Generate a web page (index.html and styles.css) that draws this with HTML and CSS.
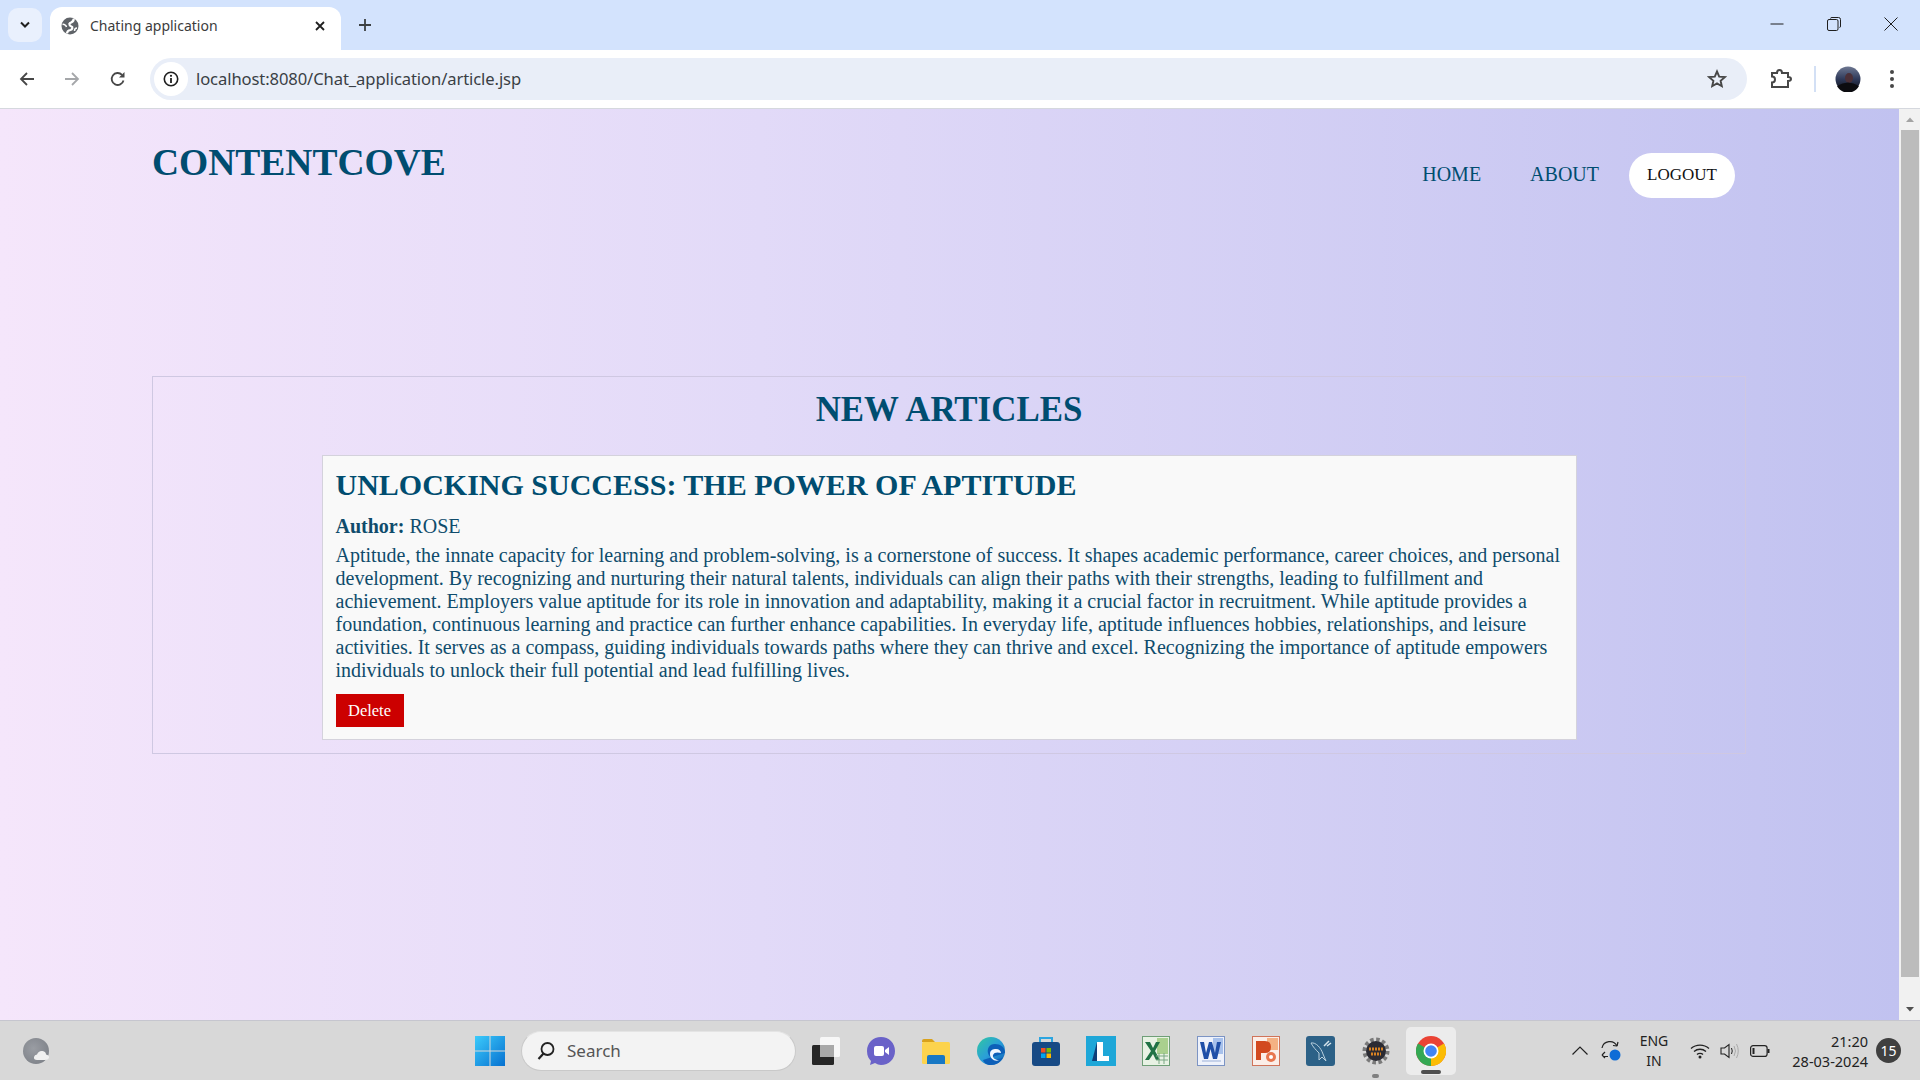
FILE: index.html
```html
<!DOCTYPE html>
<html lang="en">
<head>
<meta charset="utf-8">
<title>Chating application</title>
<link rel="stylesheet" href="styles.css">
</head>
<body>
<div class="tabstrip">
  <button class="tab-search"><svg width="12" height="8" viewBox="0 0 12 8"><path d="M2 1.500 6 5.500 10 1.500" fill="none" stroke="#1f1f1f" stroke-width="2"/></svg></button>
  <div class="tab">
    <svg class="favicon" width="18" height="18" viewBox="0 0 18 18"><circle cx="9" cy="9" r="8.500" fill="#5f6368"/><path d="M12.500 1.500C13.500 4.500 10.500 5 9 6 7.500 7 9 9 10.500 9.500 12 10 11.500 12.500 9.500 13 7 13.500 6 14.500 6 16.500" fill="none" stroke="#fff" stroke-width="2.200"/><path d="M1.500 7.500C3 7 5 8 5.500 10" fill="none" stroke="#fff" stroke-width="1.500"/><path d="M16 11C14.500 11 13.500 12 13.500 14" fill="none" stroke="#fff" stroke-width="1.500"/></svg>
    <span class="tab-title">Chating application</span>
    <svg class="tab-close" width="10" height="10" viewBox="0 0 10 10"><path d="M1 1 9 9M9 1 1 9" stroke="#1f1f1f" stroke-width="1.800"/></svg>
  </div>
  <svg class="new-tab" width="14" height="14" viewBox="0 0 14 14"><path d="M7 1V13M1 7H13" stroke="#3c4043" stroke-width="1.800"/></svg>
  <div class="window-controls">
    <svg width="14" height="14" viewBox="0 0 14 14"><path d="M0.500 7H13.500" stroke="#1f1f1f"/></svg>
    <svg width="14" height="14" viewBox="0 0 14 14"><path d="M3.500 1.500Q3.500 .5 5 .5H11.500Q13.500 .5 13.500 2.500V9Q13.500 10.500 12.500 10.500" fill="none" stroke="#1f1f1f"/><rect x=".5" y="2.500" width="10.500" height="11" rx="1.500" fill="none" stroke="#1f1f1f"/></svg>
    <svg width="14" height="14" viewBox="0 0 14 14"><path d="M.5 .5 13.500 13.500M13.500 .5 .5 13.500" stroke="#1f1f1f"/></svg>
  </div>
</div>
<div class="toolbar">
  <svg class="nav-icon nav-back" width="16" height="16" viewBox="0 0 16 16"><path d="M15 8H2M8 2 2 8 8 14" fill="none" stroke="#474747" stroke-width="1.800"/></svg>
  <svg class="nav-icon" width="16" height="16" viewBox="0 0 16 16"><path d="M1 8H14M8 2 14 8 8 14" fill="none" stroke="#a5a7aa" stroke-width="1.800"/></svg>
  <svg class="nav-icon" width="16" height="16" viewBox="0 0 16 16"><path d="M13.500 9.500A6 6 0 1 1 12 3.800" fill="none" stroke="#474747" stroke-width="1.800"/><path d="M14.500 1V6.500H9Z" fill="#474747"/></svg>
  <div class="omnibox">
    <span class="site-info"><svg width="16" height="16" viewBox="0 0 16 16"><circle cx="8" cy="8" r="6.700" fill="none" stroke="#1f1f1f" stroke-width="1.600"/><path d="M8 7V12" stroke="#1f1f1f" stroke-width="1.800"/><circle cx="8" cy="4.800" r="1.100" fill="#1f1f1f"/></svg></span>
    <span class="url">localhost:8080/Chat_application/article.jsp</span>
    <svg class="star" width="20" height="20" viewBox="0 0 20 20"><path d="M10 2.500 12.200 7.600 17.800 8.100 13.600 11.800 14.800 17.200 10 14.400 5.200 17.200 6.400 11.800 2.200 8.100 7.800 7.600Z" fill="none" stroke="#474747" stroke-width="1.900"/></svg>
  </div>
  <svg class="ext" width="22" height="20" viewBox="0 0 22 20"><path d="M2 4H7Q7 1 9.500 1T12 4H18V8Q21 8 21 10T18 12V18H2V13.500Q5 13.500 5 10.500T2 7.500Z" fill="none" stroke="#474747" stroke-width="2"/></svg>
  <span class="tool-sep"></span>
  <svg class="avatar" width="26" height="26" viewBox="0 0 26 26"><defs><linearGradient id="sky" x1="0" y1="0" x2="0" y2="1"><stop offset="0" stop-color="#6d7791"/><stop offset=".5" stop-color="#2f3a5a"/><stop offset="1" stop-color="#0b0c12"/></linearGradient></defs><circle cx="13" cy="13" r="12.500" fill="url(#sky)"/><ellipse cx="14" cy="12" rx="4" ry="5" fill="#4b3038"/><path d="M2 20Q13 13 24 20A12.500 12.500 0 0 1 2 20Z" fill="#0c0c10"/></svg>
  <svg class="menu" width="6" height="20" viewBox="0 0 6 20"><circle cx="3" cy="3" r="2" fill="#474747"/><circle cx="3" cy="10" r="2" fill="#474747"/><circle cx="3" cy="17" r="2" fill="#474747"/></svg>
</div>
<div class="viewport">
  <main class="page">
    <header class="site-header">
      <h1 class="logo">CONTENTCOVE</h1>
      <nav class="site-nav">
        <a class="nav-link">HOME</a>
        <a class="nav-link">ABOUT</a>
        <a class="nav-pill">LOGOUT</a>
      </nav>
    </header>
    <section class="articles">
      <h2 class="articles-title">NEW ARTICLES</h2>
      <article class="card">
        <h3 class="card-title">UNLOCKING SUCCESS: THE POWER OF APTITUDE</h3>
        <p class="author"><strong>Author:</strong> ROSE</p>
        <p class="body-text">Aptitude, the innate capacity for learning and problem-solving, is a cornerstone of success. It shapes academic performance, career choices, and personal development. By recognizing and nurturing their natural talents, individuals can align their paths with their strengths, leading to fulfillment and achievement. Employers value aptitude for its role in innovation and adaptability, making it a crucial factor in recruitment. While aptitude provides a foundation, continuous learning and practice can further enhance capabilities. In everyday life, aptitude influences hobbies, relationships, and leisure activities. It serves as a compass, guiding individuals towards paths where they can thrive and excel. Recognizing the importance of aptitude empowers individuals to unlock their full potential and lead fulfilling lives.</p>
        <button class="delete">Delete</button>
      </article>
    </section>
  </main>
  <div class="scrollbar">
    <svg width="20" height="21" viewBox="0 0 20 21"><path d="M6 13 10 8.500 14 13Z" fill="#a3a3a3"/></svg>
    <span class="thumb"></span>
    <svg class="scroll-down" width="20" height="20" viewBox="0 0 20 20"><path d="M6 7 10 11.500 14 7Z" fill="#505050"/></svg>
  </div>
</div>
<footer class="taskbar">
  <svg class="weather" width="28" height="28" viewBox="0 0 28 28"><defs><radialGradient id="moon" cx=".4" cy=".4" r=".7"><stop offset="0" stop-color="#9a9da3"/><stop offset="1" stop-color="#7d8188"/></radialGradient></defs><circle cx="14" cy="14" r="13" fill="url(#moon)"/><path d="M15 23Q11.500 23 12 20 12.500 17.500 15 17.500 16.500 13.500 20.500 14 24 14.500 24 17.500 27.500 18 27 21 26 23 23 23Z" fill="#f0f0f0"/></svg>
  <svg class="start" width="30" height="30" viewBox="0 0 30 30"><defs><linearGradient id="win" x1="0" y1="0" x2="1" y2="1"><stop offset="0" stop-color="#3ccbfb"/><stop offset="1" stop-color="#0670d0"/></linearGradient></defs><path d="M0 0H14.500V14.500H0ZM15.500 0H30V14.500H15.500ZM0 15.500H14.500V30H0ZM15.500 15.500H30V30H15.500Z" fill="url(#win)"/></svg>
  <div class="search">
    <svg width="20" height="20" viewBox="0 0 20 20"><circle cx="11.500" cy="8" r="6" fill="none" stroke="#222" stroke-width="1.800"/><path d="M7.500 12.500 2.500 18" stroke="#222" stroke-width="2.200"/></svg>
    <span>Search</span>
  </div>
  <div class="apps">
    <span class="app"><svg width="30" height="30" viewBox="0 0 30 30"><rect x="1" y="9" width="22" height="20" rx="1.500" fill="#262626"/><rect x="9" y="1" width="20" height="20" rx="1.500" fill="#f7f7f7"/><rect x="9" y="9" width="14" height="12" fill="#a9a9a9"/></svg></span>
    <span class="app"><svg width="30" height="30" viewBox="0 0 30 30"><path d="M15 1C7 1 1 7 1 15c0 5 2 8 4 10l-1 4 5-2c2 1 4 2 6 2 8 0 14-6 14-14S23 1 15 1Z" fill="#6a62c8"/><rect x="8" y="10" width="10" height="10" rx="2" fill="#fff"/><path d="M19 14 23 11V19L19 16Z" fill="#fff"/></svg></span>
    <span class="app"><svg width="30" height="30" viewBox="0 0 30 30"><path d="M1 5Q1 3 3 3H11L14 6H1Z" fill="#d9a21c"/><rect x="1" y="6" width="28" height="22" rx="1.500" fill="#fcd34d"/><path d="M6 28V21Q6 19 8 19H22Q24 19 24 21V28Z" fill="#1878c4"/></svg></span>
    <span class="app"><svg width="30" height="30" viewBox="0 0 30 30"><defs><linearGradient id="edge" x1="0" y1="0" x2="1" y2="1"><stop offset="0" stop-color="#30c8a0"/><stop offset=".5" stop-color="#2a9fd8"/><stop offset="1" stop-color="#0d5fb8"/></linearGradient></defs><circle cx="15" cy="15" r="14" fill="url(#edge)"/><path d="M29 17C29 11 24 8 19 8 13 8 11 13 12 17 13 21 17 23 21 23 24 23 26 22 27 21 25 26 20 29 15 29 11 29 8 27 7 24" fill="#0d5fb8"/><path d="M14 18C14 14 17 13 20 13 23 13 25 15 25 17 22 16 18 16 17 19 16 22 20 24 23 24 19 26 14 23 14 18Z" fill="#f0f7ff"/></svg></span>
    <span class="app"><svg width="30" height="30" viewBox="0 0 30 30"><path d="M9 6V2H21V6" fill="none" stroke="#2ca5e0" stroke-width="2"/><rect x="1" y="6" width="28" height="24" rx="3" fill="#174a85"/><rect x="10" y="12" width="4.500" height="4.500" fill="#f25022"/><rect x="15.500" y="12" width="4.500" height="4.500" fill="#7fba00"/><rect x="10" y="17.500" width="4.500" height="4.500" fill="#00a4ef"/><rect x="15.500" y="17.500" width="4.500" height="4.500" fill="#ffb900"/></svg></span>
    <span class="app"><svg width="30" height="30" viewBox="0 0 30 30"><rect width="30" height="30" fill="#1ea7d8"/><path d="M11 6H17V20H23V25H11Z" fill="#fff"/><path d="M11 6 6 25H11Z" fill="#103f78"/></svg></span>
    <span class="app"><svg width="28" height="30" viewBox="0 0 28 30"><rect x=".5" y=".5" width="27" height="29" fill="#e8f2e4" stroke="#6f9f78"/><path d="M15 2H26V18H15Z" fill="#a9d08e"/><path d="M3 6H8L11 12 14 6H18L13 15 18 24H14L11 18 7 24H3L9 15Z" fill="#207245"/><path d="M14 20H26M14 24H26M17 17V28M22 17V28" stroke="#7aa884"/></svg></span>
    <span class="app"><svg width="28" height="30" viewBox="0 0 28 30"><rect x=".5" y=".5" width="27" height="29" fill="#eef2fb" stroke="#7c94c4"/><path d="M16 2H26V18H16Z" fill="#a7c1ec"/><path d="M3 6H7L9 17 12 6H15L18 17 20 6H24L20 23H16L13.500 13 11 23H7Z" fill="#1f4fa8"/><path d="M5 25H24" stroke="#9bb0d8"/></svg></span>
    <span class="app"><svg width="28" height="30" viewBox="0 0 28 30"><rect x=".5" y=".5" width="27" height="29" fill="#fbeee8" stroke="#d0745a"/><path d="M15 2H26V14H15Z" fill="#f4b183"/><path d="M4 5H13Q19 5 19 11T13 17H9V24H4Z" fill="#d2491f"/><circle cx="19" cy="21" r="5" fill="#e8764e"/><circle cx="19" cy="21" r="2" fill="#fff"/></svg></span>
    <span class="app"><svg width="29" height="30" viewBox="0 0 29 30"><rect width="29" height="30" rx="3" fill="#2c6187"/><path d="M5 7C10 6 15 12 17 18L20 25 16 21 13 24 13 17C10 14 7 11 5 7Z" fill="none" stroke="#b9d0de" stroke-width="1"/><path d="M18 10 23 5M21 10 25 7" stroke="#d6e4ec" stroke-width="1.500"/></svg></span>
    <span class="app app-running"><svg width="28" height="28" viewBox="0 0 28 28"><circle cx="14" cy="14" r="11.500" fill="none" stroke="#7a7a7a" stroke-width="4" stroke-dasharray="3.500 2.500"/><circle cx="14" cy="14" r="10" fill="#2b2b33"/><path d="M7 12H21M9 17H19" stroke="#d98222" stroke-width="3" stroke-dasharray="2 1"/></svg></span>
    <span class="app app-active"><svg width="30" height="30" viewBox="0 0 30 30"><circle cx="15" cy="15" r="15" fill="#ea4335"/><path d="M15 15 28 7.500A15 15 0 0 1 15 30Z" fill="#fbbc04"/><path d="M15 15 15 30A15 15 0 0 1 2 7.500Z" fill="#34a853"/><circle cx="15" cy="15" r="7.500" fill="#fff"/><circle cx="15" cy="15" r="5.800" fill="#4285f4"/></svg></span>
  </div>
  <div class="tray">
    <svg width="16" height="9" viewBox="0 0 16 9"><path d="M.5 8.500 8 1 15.500 8.500" fill="none" stroke="#222" stroke-width="1.200"/></svg>
    <svg class="tray-sync" width="22" height="22" viewBox="0 0 22 22"><path d="M2 8A8 8 0 0 1 17 6M3 16.500H8" fill="none" stroke="#222" stroke-width="1.200"/><path d="M17 6 13 5.500M17 6 18 2M2 15 5 12M2 15 5 18" stroke="#222" stroke-width="1.200"/><circle cx="15" cy="15" r="5.500" fill="#0f6cd6"/></svg>
    <div class="lang"><span>ENG</span><span>IN</span></div>
    <svg class="tray-wifi" width="20" height="16" viewBox="0 0 20 16"><path d="M1 5.500C6 1 14 1 19 5.500M4 8.500C7.500 5.500 12.500 5.500 16 8.500M7 11.500C8.500 10 11.500 10 13 11.500" fill="none" stroke="#222" stroke-width="1.300"/><circle cx="10" cy="14" r="1.500" fill="#222"/></svg>
    <svg class="tray-vol" width="20" height="16" viewBox="0 0 20 16"><path d="M1 5H4.500L9 1.500V14.500L4.500 11H1Z" fill="none" stroke="#222" stroke-width="1.100"/><path d="M11.500 5Q13 8 11.500 11" fill="none" stroke="#222"/><path d="M14 3Q17 8 14 13M16.500 1Q20 8 16.500 15" fill="none" stroke="#aaa"/></svg>
    <svg class="tray-bat" width="20" height="12" viewBox="0 0 20 12"><rect x=".6" y=".6" width="16.500" height="10.800" rx="2.500" fill="none" stroke="#222" stroke-width="1.200"/><rect x="2.500" y="3" width="2" height="6" fill="#222"/><rect x="17.500" y="4" width="2" height="4" fill="#222"/></svg>
    <div class="clock"><span>21:20</span><span>28-03-2024</span></div>
    <span class="badge">15</span>
  </div>
</footer>
</body>
</html>
```
FILE: styles.css
```css
* { box-sizing: border-box; }
html, body { margin: 0; height: 100%; }
body {
  width: 1920px; height: 1080px; overflow: hidden;
  display: flex; flex-direction: column;
  font-family: "Liberation Serif", serif;
}
h1, h2, h3, p { margin: 0; }

/* browser chrome */
.tabstrip {
  height: 50px; flex: none; background: #d3e3fd;
  display: flex; align-items: flex-start;
  padding-left: 8px;
  font-family: "Noto Sans", sans-serif;
}
.tab-search {
  width: 34px; height: 34px; margin-top: 8px; border: 0; border-radius: 10px;
  background: #e9f0fd; display: flex; align-items: center; justify-content: center; padding: 0;
}
.tab {
  width: 291px; height: 43px; margin: 7px 0 0 8px;
  background: #fff; border-radius: 12px 12px 0 0;
  display: flex; align-items: center; padding: 0 16px 6px 11px;
}
.favicon { flex: none; }
.tab-title { margin-left: 11px; font-size: 14px; color: #3c3c3c; flex: 1; }
.new-tab { margin: 18px 0 0 17px; }
.window-controls { margin-left: auto; display: flex; gap: 43px; padding: 17px 22px 0 0; }
.toolbar {
  height: 59px; flex: none; background: #fff; border-bottom: 1px solid #d5d8de;
  border-radius: 12px 12px 0 0;
  display: flex; align-items: center; padding: 0 20px 1px 19px;
}
.nav-icon { margin-right: 30px; flex: none; }
.nav-back { margin-right: 29px; }
.omnibox {
  width: 1597px; height: 42px; margin-left: -6px; background: #e9eef8; border-radius: 21px;
  display: flex; align-items: center; padding: 0 20px 0 4px;
}
.site-info {
  width: 34px; height: 34px; border-radius: 50%; background: #fff; margin-right: 8px;
  display: flex; align-items: center; justify-content: center;
}
.url { font: 16.600px "Noto Sans", sans-serif; color: #3a3f45; flex: 1; letter-spacing: -.1px; }
.ext { margin-left: 23px; flex: none; }
.tool-sep { width: 2px; height: 26px; background: #d3e0f5; margin-left: 22px; }
.avatar { margin-left: 19px; flex: none; }
.menu { margin-left: 28px; flex: none; }

/* page */
.viewport { flex: 1; display: flex; min-height: 0; }
.page {
  width: 1899px; flex: none; padding: 0 153px 0 152px;
  background: linear-gradient(90deg, #f5e6fb 0%, #e2daf8 40%, #c1c2f0 100%);
}
.site-header { height: 267px; display: flex; justify-content: space-between; align-items: flex-start; }
.logo { font-size: 37.500px; line-height: 44px; margin-top: 32px; color: #004d70; font-weight: 700; }
.site-nav { display: flex; align-items: center; margin: 44px 11px 0 0; }
.nav-link { font-size: 20px; color: #004d70; margin: 0 49px 2px 0; }
.nav-link:nth-child(2) { margin-right: 30px; }
.nav-pill {
  height: 45px; width: 106px; background: #fff; border-radius: 23px; color: #111;
  font-size: 17px; display: flex; align-items: center; justify-content: center; padding-bottom: 2px;
}
.articles { border: 1px solid #cfc8e2; height: 378px; padding-top: 13px; display: flex; flex-direction: column; align-items: center; }
.articles-title { font-size: 34.900px; line-height: 40px; color: #004d70; font-weight: 700; }
.card {
  width: 1255px; margin-top: 25px; height: 285px; background: #f9f9f9; border: 1px solid #d4d2dc;
  padding: 12px 13px; color: #0f4c6c;
}
.card-title { font-size: 30px; line-height: 34px; color: #004d70; font-weight: 700; }
.author { font-size: 20px; line-height: 24px; margin-top: 12px; }
.body-text { font-size: 20px; line-height: 23px; margin-top: 6px; }
.delete {
  display: block; width: 68px; height: 33px; margin-top: 12px; padding: 0;
  background: #cc0000; color: #fff; border: 0; font: 16.500px "Liberation Serif", serif;
}
.scrollbar { flex: 1; background: #f1f1f1; display: flex; flex-direction: column; align-items: center; }
.thumb { height: 847px; flex: none; width: 18px; background: #bcbcbc; }
.scroll-down { margin-top: auto; }

/* taskbar */
.taskbar {
  height: 60px; flex: none; background: #d8d8d8; border-top: 1px solid #c6c6cf;
  display: flex; align-items: center; padding-left: 22px;
  font-family: "Noto Sans", sans-serif; color: #222;
}
.start { margin-left: 425px; flex: none; }
.search {
  width: 275px; height: 40px; margin-left: 16px; background: #f3f3f3; border-radius: 20px;
  border: 1px solid #c9c9c9; border-top-color: #e4e4e4;
  display: flex; align-items: center; gap: 11px; padding-left: 14px;
  font-size: 17px; color: #555;
}
.apps { display: flex; margin-left: 2px; }
.app { width: 55px; height: 48px; display: flex; align-items: center; justify-content: center; border-radius: 5px; position: relative; }
.app-active { background: #ececec; width: 50px; margin-left: 3px; }
.app-running::after, .app-active::after {
  content: ""; position: absolute; bottom: -3px; height: 4px; border-radius: 2px;
}
.app-running::after { width: 7px; background: #808080; }
.app-active::after { width: 20px; background: #505050; bottom: 1px; }
.tray { display: flex; align-items: center; margin-left: 116px; }
.tray-sync { margin-left: 12px; }
.lang { display: flex; flex-direction: column; align-items: center; width: 32px; margin-left: 16px; font-size: 14px; line-height: 20px; }
.tray-wifi { margin-left: 20px; }
.tray-vol { margin-left: 10px; }
.tray-bat { margin-left: 10px; }
.clock { display: flex; flex-direction: column; align-items: flex-end; margin-left: 20px; width: 78px; font-size: 14.500px; line-height: 20px; white-space: nowrap; }
.badge {
  width: 25px; height: 25px; margin-left: 8px; border-radius: 50%; background: #404040; color: #fff;
  font-size: 14px; display: flex; align-items: center; justify-content: center;
}
```
